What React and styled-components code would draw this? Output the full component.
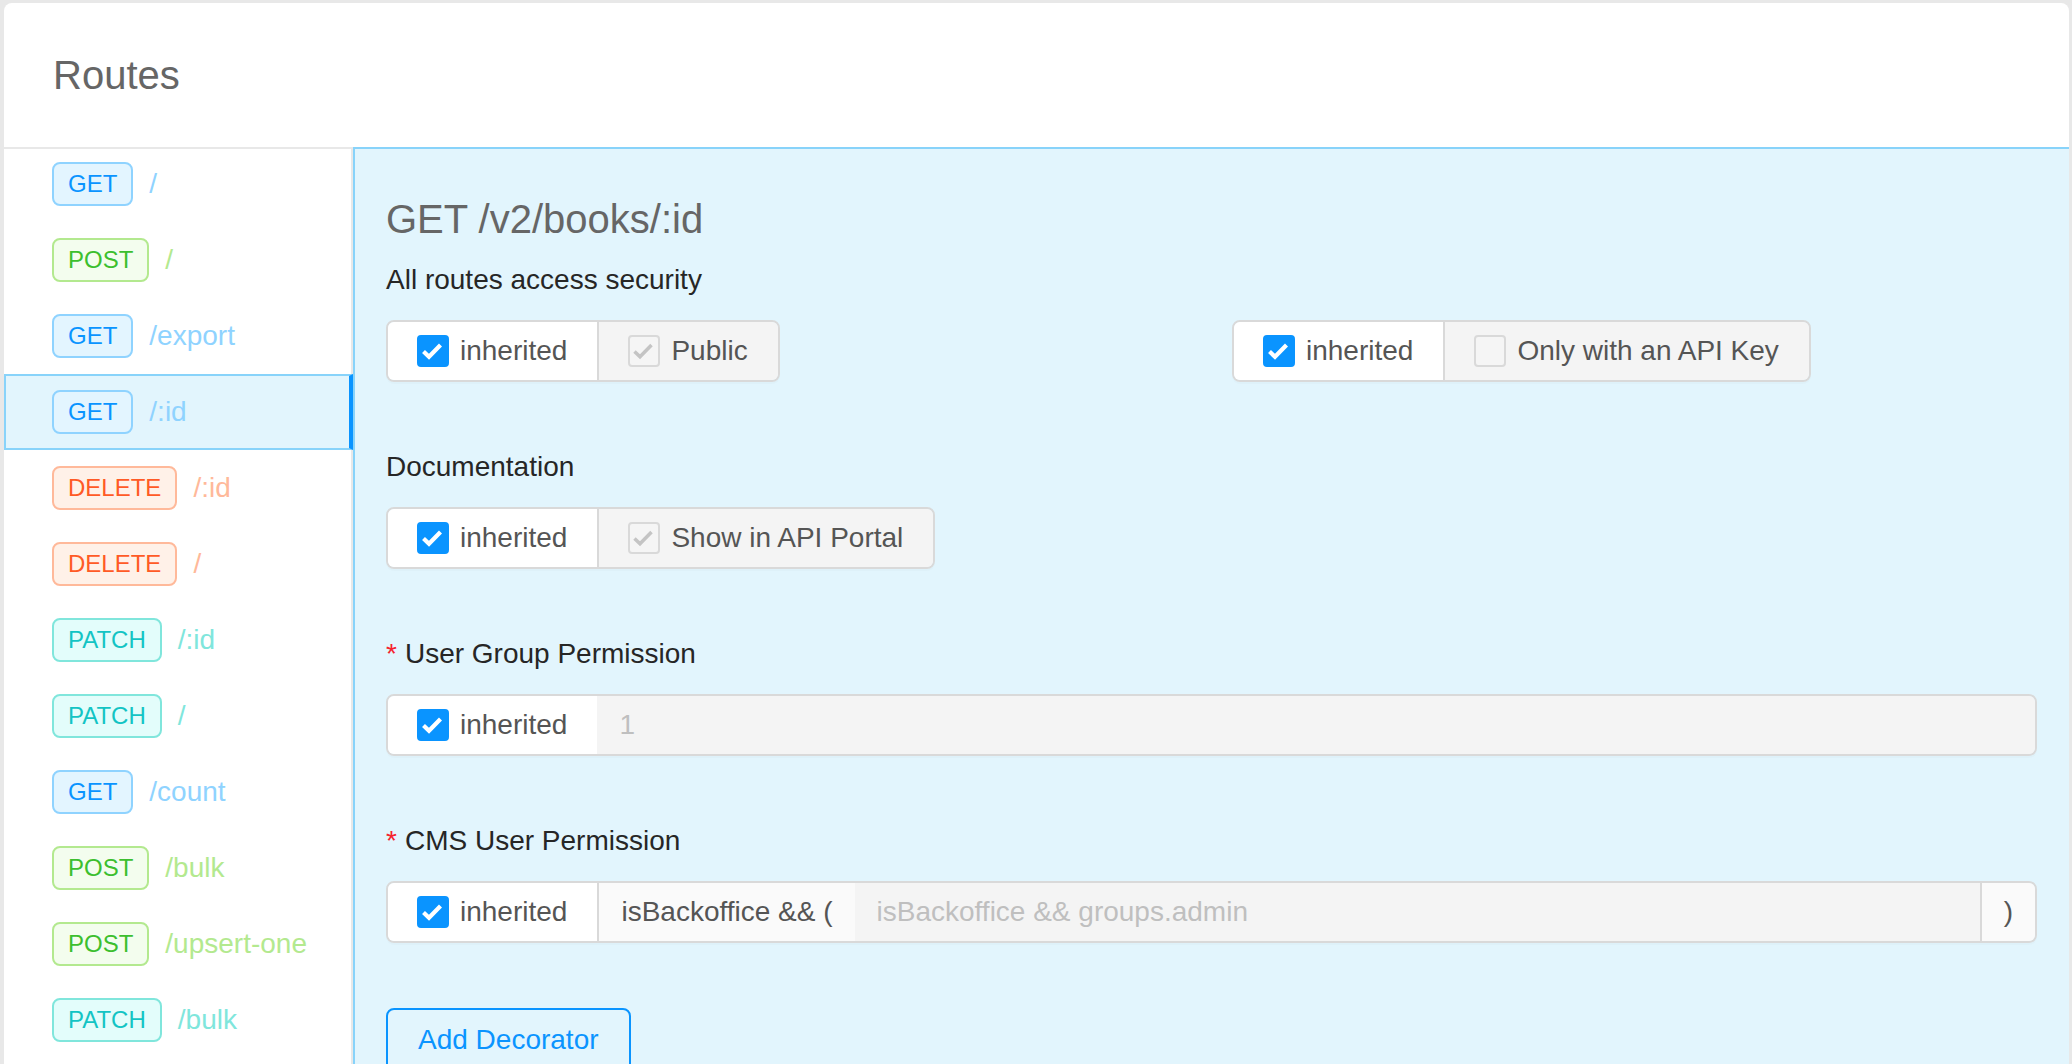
import React from "react";
import styled, { createGlobalStyle, css } from "styled-components";

const GlobalStyle = createGlobalStyle`
  html, body { margin: 0; padding: 0; }
  body {
    background: #e8e8e8;
    font-family: "Liberation Sans", Arial, Helvetica, sans-serif;
    overflow: hidden;
  }
  * { box-sizing: border-box; }
`;

const BLUE = "#0a94ff";

const methodColors = {
  GET: { text: BLUE, bg: "#e3f5ff", border: "#8fd3ff" },
  POST: { text: "#3cbf2f", bg: "#f3fdee", border: "#b3e98f" },
  DELETE: { text: "#ff5a26", bg: "#fff1e8", border: "#ffb99a" },
  PATCH: { text: "#13c4c4", bg: "#e3fdfb", border: "#80e6dc" },
};

const Page = styled.div`
  min-height: 100vh;
  padding: 3px 3px 0 4px;
  display: flex;
  flex-direction: column;
`;

const Card = styled.div`
  flex: 1;
  background: #fff;
  border-radius: 8px 8px 0 0;
  display: flex;
  flex-direction: column;
`;

const Header = styled.header`
  height: 144px;
  display: flex;
  align-items: center;
  padding: 0 49px;
`;

const HeaderTitle = styled.h1`
  margin: 0;
  font-size: 40px;
  line-height: 1;
  font-weight: 400;
  color: #666;
`;

const Body = styled.div`
  flex: 1;
  display: flex;
  min-height: 1000px;
`;

const Sidebar = styled.nav`
  width: 349px;
  flex: none;
  border-top: 2px solid #e8e8e8;
  border-right: 2px solid #e8e8e8;
`;

const RouteList = styled.ul`
  list-style: none;
  margin: -3px -2px 0 0;
  padding: 0;
`;

const RouteRow = styled.li`
  height: 76px;
  display: flex;
  align-items: center;
  padding-left: 46px;
  border: 2px solid transparent;
  ${(p) =>
    p.$active &&
    css`
      background: #e2f5fd;
      border-color: #88d3fa;
      border-right: 4px solid ${BLUE};
    `}
`;

const MethodTag = styled.span`
  display: inline-flex;
  align-items: center;
  height: 44px;
  padding: 0 14px;
  border: 2px solid ${(p) => methodColors[p.$method].border};
  background: ${(p) => methodColors[p.$method].bg};
  color: ${(p) => methodColors[p.$method].text};
  border-radius: 8px;
  font-size: 24px;
  line-height: 40px;
  margin-right: 16px;
`;

const RoutePath = styled.span`
  font-size: 28px;
  color: ${(p) => methodColors[p.$method].border};
`;

const Panel = styled.main`
  flex: 1;
  background: #e2f5fd;
  border-top: 2px solid #88d3fa;
  border-left: 2px solid #88d3fa;
  padding: 46px 32px 0 31px;
`;

const PanelTitle = styled.h2`
  margin: 0 0 15px;
  font-size: 40px;
  line-height: 48px;
  font-weight: 400;
  color: #666;
`;

const TwoCols = styled.div`
  display: grid;
  grid-template-columns: 1fr 1fr;
  column-gap: 41px;
`;

const FormItem = styled.div`
  margin-bottom: 63px;
  padding-top: ${(p) => (p.$noLabel ? "62px" : "0")};
`;

const Label = styled.div`
  font-size: 28px;
  line-height: 44px;
  color: #262626;
  margin-bottom: 18px;
`;

const Required = styled.span`
  color: #f5222d;
  margin-right: 8px;
  font-size: 28px;
`;

const Group = styled.div`
  display: ${(p) => (p.$block ? "flex" : "inline-flex")};
  height: 62px;
  border: 2px solid #d9d9d9;
  border-radius: 8px;
  overflow: hidden;
  box-shadow: 0 2px 0 rgba(0, 0, 0, 0.015);
  & > * + * {
    border-left: 2px solid #d9d9d9;
  }
`;

const Option = styled.label`
  display: flex;
  align-items: center;
  gap: 11px;
  padding: 0 30px 0 29px;
  background: ${(p) => (p.$muted ? "#f4f4f4" : "#fff")};
  color: #555;
  font-size: 28px;
  white-space: nowrap;
`;

const Box = styled.span`
  width: 32px;
  height: 32px;
  flex: none;
  border-radius: 4px;
  display: inline-flex;
  align-items: center;
  justify-content: center;
  border: 2px solid ${(p) => (p.$disabled ? "#d9d9d9" : BLUE)};
  background: ${(p) => (p.$disabled ? "#f5f5f5" : BLUE)};
`;

const Addon = styled.span`
  display: flex;
  align-items: center;
  padding: 0 22px;
  background: #fafafa;
  color: #555;
  font-size: 28px;
  white-space: nowrap;
`;

const Field = styled.input`
  flex: 1;
  min-width: 0;
  border: none;
  outline: none;
  background: #f4f4f4;
  padding: 0 22px;
  font-family: inherit;
  font-size: 28px;
  color: #555;
  &::placeholder {
    color: #bfbfbf;
  }
`;

const Button = styled.button`
  margin-top: 2px;
  height: 64px;
  padding: 0 30px;
  border: 2px solid ${BLUE};
  border-radius: 8px;
  background: transparent;
  color: ${BLUE};
  font-family: inherit;
  font-size: 28px;
  cursor: pointer;
`;

function Checkbox({ checked = true, disabled = false }) {
  return (
    <Box $disabled={disabled}>
      {checked && (
        <svg width="28" height="28" viewBox="0 0 28 28" aria-hidden="true">
          <polyline
            points="4.5,14.5 10,19.8 21.5,8"
            fill="none"
            stroke={disabled ? "#c4c4c4" : "#fff"}
            strokeWidth={disabled ? 3.5 : 4.2}
            strokeLinejoin="miter"
          />
        </svg>
      )}
    </Box>
  );
}

const routes = [
  ["GET", "/"],
  ["POST", "/"],
  ["GET", "/export"],
  ["GET", "/:id", true],
  ["DELETE", "/:id"],
  ["DELETE", "/"],
  ["PATCH", "/:id"],
  ["PATCH", "/"],
  ["GET", "/count"],
  ["POST", "/bulk"],
  ["POST", "/upsert-one"],
  ["PATCH", "/bulk"],
];

function Inherited() {
  return (
    <Option>
      <Checkbox />
      inherited
    </Option>
  );
}

export default function App() {
  return (
    <>
      <GlobalStyle />
      <Page>
        <Card>
          <Header>
            <HeaderTitle>Routes</HeaderTitle>
          </Header>
          <Body>
            <Sidebar>
              <RouteList>
                {routes.map(([m, p, active], i) => (
                  <RouteRow key={i} $active={active}>
                    <MethodTag $method={m}>{m}</MethodTag>
                    <RoutePath $method={m}>{p}</RoutePath>
                  </RouteRow>
                ))}
              </RouteList>
            </Sidebar>
            <Panel>
              <PanelTitle>GET /v2/books/:id</PanelTitle>
              <TwoCols>
                <FormItem>
                  <Label>All routes access security</Label>
                  <Group>
                    <Inherited />
                    <Option $muted>
                      <Checkbox disabled />
                      Public
                    </Option>
                  </Group>
                </FormItem>
                <FormItem $noLabel>
                  <Group>
                    <Inherited />
                    <Option $muted>
                      <Checkbox disabled checked={false} />
                      Only with an API Key
                    </Option>
                  </Group>
                </FormItem>
              </TwoCols>
              <FormItem>
                <Label>Documentation</Label>
                <Group>
                  <Inherited />
                  <Option $muted>
                    <Checkbox disabled />
                    Show in API Portal
                  </Option>
                </Group>
              </FormItem>
              <FormItem>
                <Label>
                  <Required>*</Required>User Group Permission
                </Label>
                <Group $block>
                  <Inherited />
                  <Field placeholder="1" readOnly />
                </Group>
              </FormItem>
              <FormItem>
                <Label>
                  <Required>*</Required>CMS User Permission
                </Label>
                <Group $block>
                  <Inherited />
                  <Addon>isBackoffice &amp;&amp; (</Addon>
                  <Field placeholder="isBackoffice && groups.admin" readOnly />
                  <Addon>)</Addon>
                </Group>
              </FormItem>
              <Button type="button">Add Decorator</Button>
            </Panel>
          </Body>
        </Card>
      </Page>
    </>
  );
}
